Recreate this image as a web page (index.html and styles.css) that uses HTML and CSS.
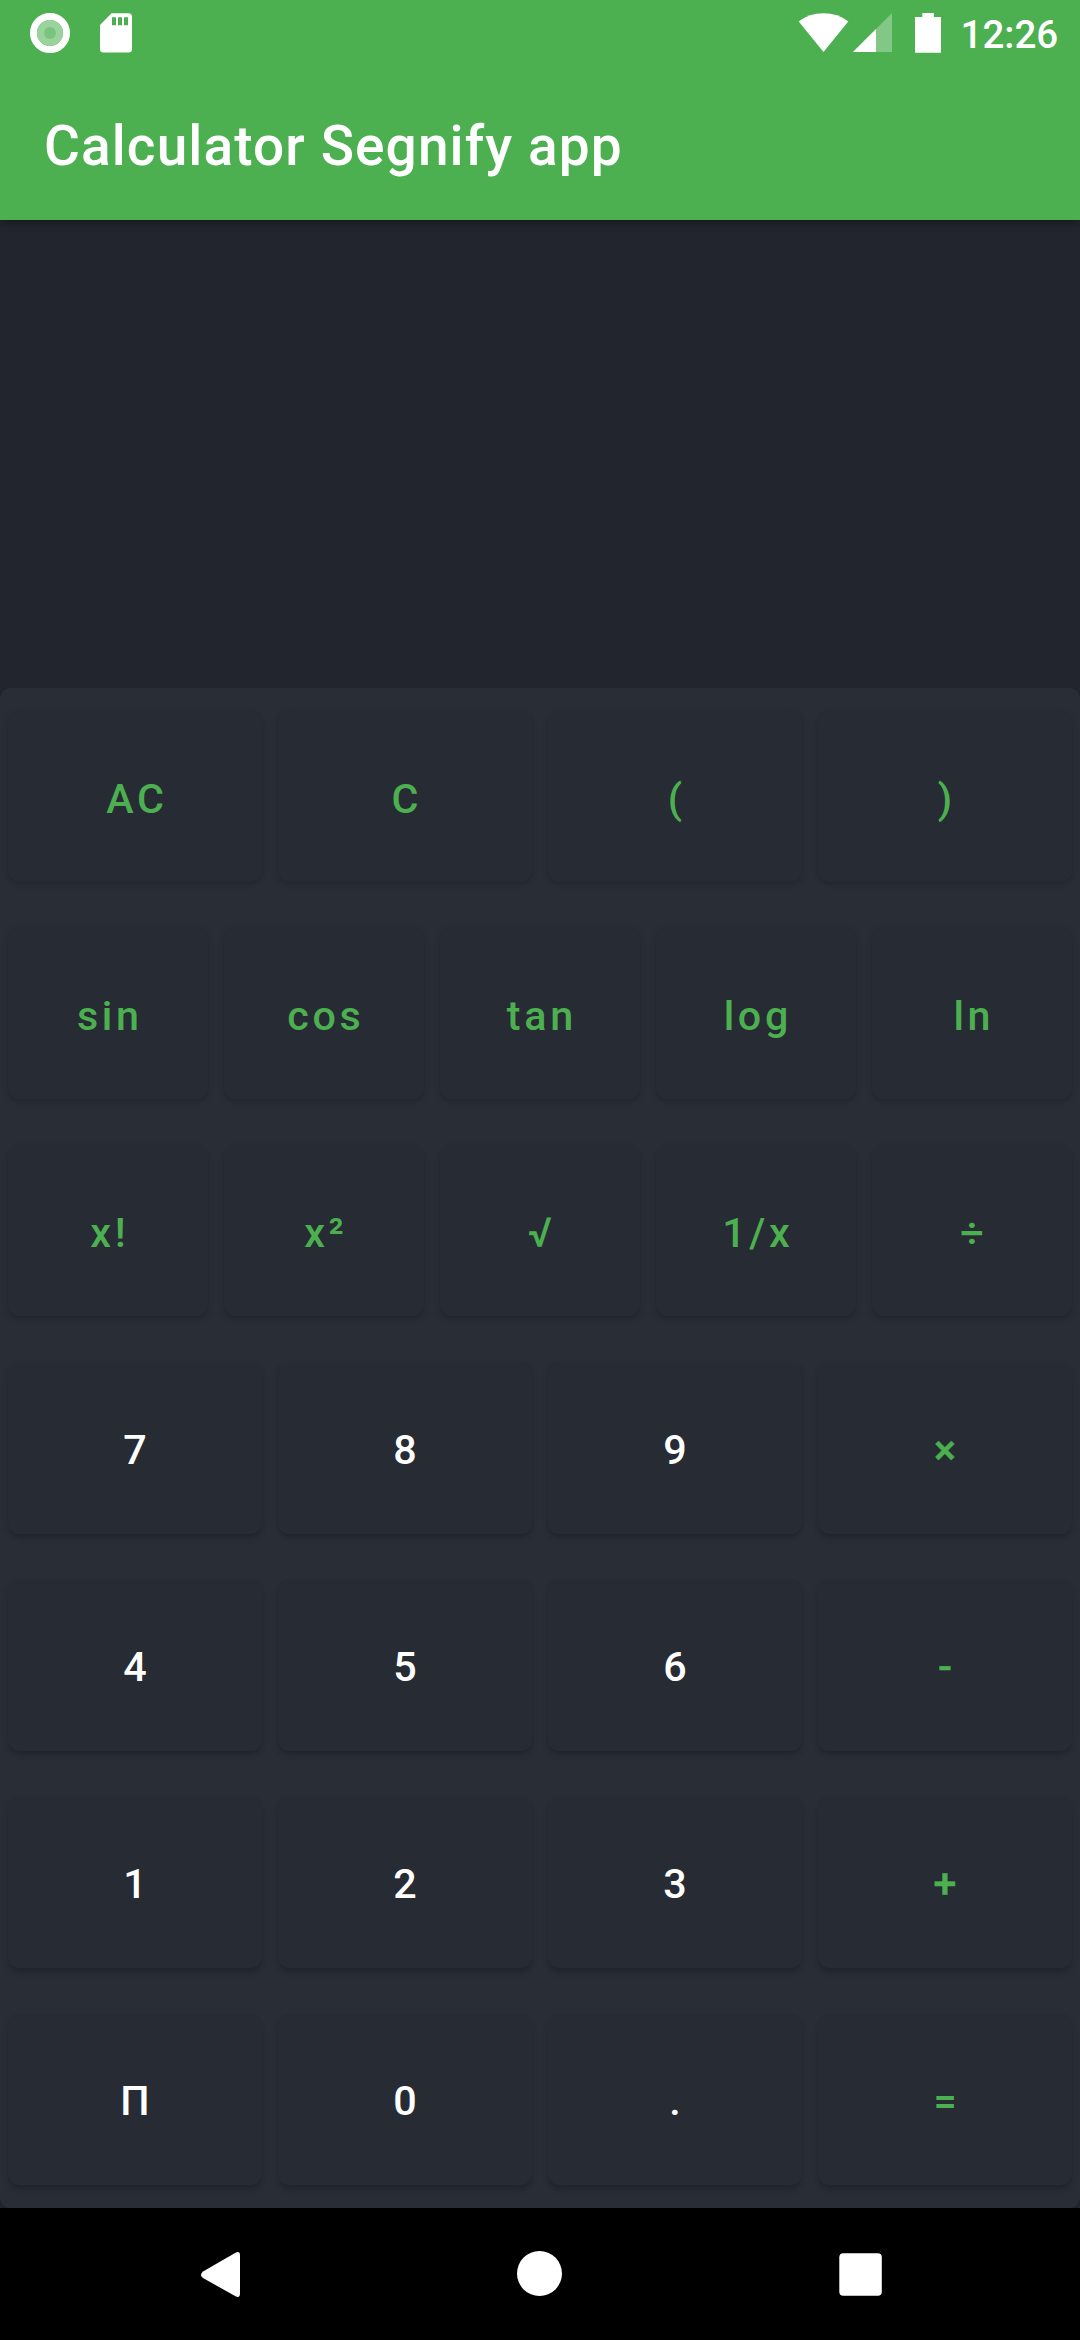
FILE: index.html
```html
<!DOCTYPE html>
<html lang="en">
<head>
<meta charset="utf-8">
<title>Calculator Segnify app</title>
<link rel="stylesheet" href="styles.css">
</head>
<body>
<div class="screen">
  <header class="header">
    <div class="status">
      <svg class="status-left" width="150" height="66" viewBox="0 0 150 66" fill="#fff">
        <circle cx="50" cy="33" r="16.5" fill="none" stroke="#fff" stroke-width="7"/>
        <circle cx="50" cy="33" r="13" fill="#9bd39d"/>
        <circle cx="50" cy="33" r="6" fill="#7ac57d"/>
        <path fill-rule="evenodd" d="M111.500 13.300H128.500a3.500 3.500 0 0 1 3.500 3.500V49a3.500 3.500 0 0 1-3.500 3.500H103.500A3.500 3.500 0 0 1 100 49V25zM112 17.300V25.300h4V17.300zM118 17.300V25.300h4V17.300zM124 17.300V25.300h4V17.300z"/>
      </svg>
      <svg class="status-right" width="160" height="66" viewBox="790 0 160 66" fill="#fff">
        <path d="M798.700 21.500Q809 13.200 823.500 13.200T848.300 21.500L823.500 52z"/>
        <path d="M892 13V52H853z" fill-opacity=".3"/>
        <path d="M876 29V52H853z"/>
        <path d="M922.300 13h11.600v4H941V52.700H915V17h7.300z"/>
      </svg>
      <span class="clock">12:26</span>
    </div>
    <h1 class="title">Calculator Segnify app</h1>
  </header>
  <div class="display"></div>
  <main class="keypad">
    <div class="row row-1"><button class="key accent">AC</button><button class="key accent">C</button><button class="key accent">(</button><button class="key accent">)</button></div>
    <div class="row row-2"><button class="key accent">sin</button><button class="key accent">cos</button><button class="key accent">tan</button><button class="key accent">log</button><button class="key accent">ln</button></div>
    <div class="row row-3"><button class="key accent">x!</button><button class="key accent">x²</button><button class="key accent">√</button><button class="key accent">1/x</button><button class="key accent">÷</button></div>
    <div class="row row-4"><button class="key">7</button><button class="key">8</button><button class="key">9</button><button class="key accent operator">×</button></div>
    <div class="row row-5"><button class="key">4</button><button class="key">5</button><button class="key">6</button><button class="key accent operator">-</button></div>
    <div class="row row-6"><button class="key">1</button><button class="key">2</button><button class="key">3</button><button class="key accent operator">+</button></div>
    <div class="row row-7"><button class="key">П</button><button class="key">0</button><button class="key">.</button><button class="key accent">=</button></div>
  </main>
  <nav class="navbar">
    <svg width="1080" height="132" viewBox="0 2208 1080 132" fill="#fff">
      <path d="M235.500 2252.700Q240 2250.500 240 2255.500V2293.500Q240 2298.500 235.500 2296.300L203 2278Q199 2275 203 2271.500z"/>
      <circle cx="539.500" cy="2273.500" r="22.500"/>
      <rect x="839.300" y="2253.300" width="42.500" height="42.500" rx="4"/>
    </svg>
  </nav>
</div>
</body>
</html>
```
FILE: styles.css
```css
body {
  margin: 0;
  background: #22252d;
  font-family: Roboto, "Liberation Sans", sans-serif;
}

.screen {
  display: flex;
  flex-direction: column;
  width: 1080px;
  height: 2340px;
  overflow: hidden;
}

.header {
  height: 220px;
  background: #4caf50;
  color: #fff;
  box-shadow: 0 2px 8px rgba(0, 0, 0, .4);
}

.status {
  display: flex;
  height: 66px;
}

.status-right {
  margin-left: auto;
}

.clock {
  width: 130px;
  box-sizing: border-box;
  padding-left: 10.5px;
  font-size: 38.5px;
  font-weight: 500;
  line-height: 70px;
}

.title {
  margin: 0;
  padding: 3px 0 0 44px;
  font-size: 55px;
  font-weight: 500;
  line-height: 154px;
  height: 151px;
  letter-spacing: 1.1px;
  white-space: nowrap;
}

.display {
  height: 468px;
}

.keypad {
  display: grid;
  grid-template-rows: repeat(7, 1fr);
  height: 1520px;
  background: #292d36;
  border-radius: 11px;
}

.row {
  display: grid;
  grid-auto-flow: column;
  grid-auto-columns: 1fr;
  gap: 16px;
  padding: 23px 8px;
}

.row-1 { --drop: 2px; }
.row-2 { --drop: 2.5px; }
.row-3 { --drop: 3px; }
.row-4 { --drop: 3.5px; }
.row-5 { --drop: 4px; }
.row-6 { --drop: 4.5px; }
.row-7 { --drop: 5px; }

.key {
  min-width: 0;
  padding: 4px 0 0 3.68px;
  border: 0;
  border-radius: 11px;
  background: #272b33;
  box-shadow: 0 var(--drop) 6px -1px rgba(0, 0, 0, .24);
  color: #fff;
  font: 500 41.25px Roboto, "Liberation Sans", sans-serif;
  letter-spacing: 3.68px;
}

.accent {
  color: #4caf50;
}

.operator {
  -webkit-text-stroke: .5px #4caf50;
}

.navbar {
  height: 132px;
  background: #000;
}

.navbar svg {
  display: block;
}
```
